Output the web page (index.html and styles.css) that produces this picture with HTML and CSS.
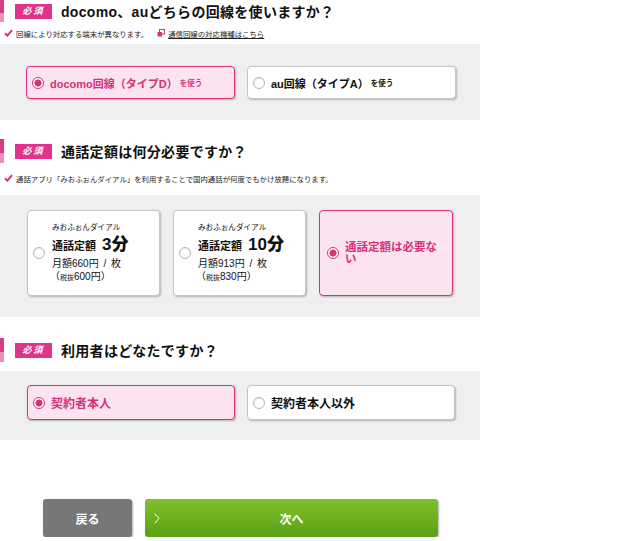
FILE: index.html
```html
<!DOCTYPE html>
<html lang="ja">
<head>
  <meta charset="UTF-8">
  <meta name="viewport" content="width=device-width, initial-scale=1">
  <title>お申し込み内容の選択</title>
  <link rel="stylesheet" href="styles.css">
</head>
<body>

<div class="form">

  <!-- 回線 -->
  <section class="q q-first">
    <h2 class="q-title"><span class="req">必須</span>docomo、auどちらの回線を使いますか？</h2>
    <p class="note">
      <svg class="check" width="9" height="8" viewBox="0 0 9 8"><path d="M1 4.2 L3.4 6.6 L8 1.2" fill="none" stroke="#d9307a" stroke-width="2"/></svg>
      回線により対応する端末が異なります。
      <a class="link" href="#">
        <svg width="8" height="8" viewBox="0 0 8 8"><rect x="2.5" y="0.5" width="5" height="4.5" fill="#fff" stroke="#d9307a"/><rect x="0.5" y="3" width="4.5" height="4.5" fill="#d9307a"/></svg>
        通信回線の対応機種はこちら
      </a>
    </p>
    <div class="panel panel-line">
      <label class="choice on"><span class="radio"></span>docomo回線（タイプD）<small>を使う</small></label>
      <label class="choice"><span class="radio"></span>au回線（タイプA）<small>を使う</small></label>
    </div>
  </section>

  <!-- 通話定額 -->
  <section class="q q-second">
    <h2 class="q-title"><span class="req">必須</span>通話定額は何分必要ですか？</h2>
    <p class="note">
      <svg class="check" width="9" height="8" viewBox="0 0 9 8"><path d="M1 4.2 L3.4 6.6 L8 1.2" fill="none" stroke="#d9307a" stroke-width="2"/></svg>
      通話アプリ「みおふぉんダイアル」を利用することで国内通話が何度でもかけ放題になります。
    </p>
    <div class="panel panel-plan">
      <label class="card">
        <span class="radio"></span>
        <span class="plan">
          <span class="plan-app">みおふぉんダイアル</span>
          <span class="plan-name">通話定額<b>3分</b></span>
          <span class="plan-price">月額660円 / 枚</span>
          <span class="plan-tax">（<small>税抜</small>600円）</span>
        </span>
      </label>
      <label class="card">
        <span class="radio"></span>
        <span class="plan">
          <span class="plan-app">みおふぉんダイアル</span>
          <span class="plan-name">通話定額<b>10分</b></span>
          <span class="plan-price">月額913円 / 枚</span>
          <span class="plan-tax">（<small>税抜</small>830円）</span>
        </span>
      </label>
      <label class="card on">
        <span class="radio"></span>
        <span class="plan-none">通話定額は必要ない</span>
      </label>
    </div>
  </section>

  <!-- 利用者 -->
  <section class="q q-third">
    <h2 class="q-title"><span class="req">必須</span>利用者はどなたですか？</h2>
    <div class="panel panel-user">
      <label class="choice big on"><span class="radio"></span>契約者本人</label>
      <label class="choice big"><span class="radio"></span>契約者本人以外</label>
    </div>
  </section>

  <div class="nav">
    <button class="btn btn-back" type="button">戻る</button>
    <button class="btn btn-next" type="button">
      <svg class="arrow" width="6" height="11" viewBox="0 0 6 11"><path d="M0.8 0.8 L5 5.5 L0.8 10.2" fill="none" stroke="#fff" stroke-width="1"/></svg>
      次へ
    </button>
  </div>

</div>

</body>
</html>
```

FILE: styles.css
```css
body {
  margin: 0;
  background: #fff;
  color: #111;
  font-family: "Liberation Sans", "Noto Sans CJK JP", sans-serif;
}

.form {
  width: 480px;
}

/* 見出し */
.q-title {
  display: flex;
  align-items: center;
  height: 24px;
  margin: 0;
  padding-left: 11px;
  border-left: 4px solid;
  border-image: linear-gradient(#dc3a86 58%, #ef8dbd 58%) 1;
  font-size: 14px;
  font-weight: bold;
  letter-spacing: 0.3px;
}

.q-first .q-title {
  height: 22px;
}

.req {
  display: inline-block;
  width: 37px;
  height: 15px;
  margin-right: 9px;
  background: #e0338a;
  color: #fff;
  font-size: 9px;
  font-style: italic;
  line-height: 15px;
  text-align: center;
  letter-spacing: 2px;
}

.note {
  display: flex;
  align-items: center;
  margin: 6px 0 0;
  padding-left: 4px;
  height: 10px;
  font-size: 7.4px;
  color: #222;
}

.check {
  margin-right: 3px;
}

.link {
  display: inline-flex;
  align-items: center;
  margin-left: 9px;
  color: #222;
  text-decoration: underline;
}

.link svg {
  margin-right: 3px;
}

.q-second {
  margin-top: 19px;
}

.q-second .note {
  margin-top: 10px;
}

.q-third {
  margin-top: 21px;
}

/* 選択肢 */
.panel {
  display: flex;
  background: #efefef;
}

.panel-line {
  margin-top: 6px;
  padding: 22px 0 21px 26px;
  gap: 12px;
}

.panel-plan {
  margin-top: 12px;
  padding: 15px 0 21px 27px;
  gap: 13px;
}

.panel-user {
  margin-top: 9px;
  padding: 14px 0 20px 27px;
  gap: 12px;
}

.choice {
  display: flex;
  align-items: center;
  box-sizing: border-box;
  width: 209px;
  height: 33px;
  padding-left: 5px;
  background: #fff;
  border: 1px solid #c6c6c6;
  border-radius: 4px;
  box-shadow: 1px 1px 2px rgba(0,0,0,0.25);
  font-size: 11px;
  font-weight: bold;
}

.choice small {
  font-size: 7.5px;
  margin-left: 2px;
}

.choice.big {
  width: 208px;
  height: 35px;
  font-size: 12px;
}

.radio {
  flex: none;
  box-sizing: border-box;
  width: 12px;
  height: 12px;
  margin-right: 6px;
  border: 1px solid #b5b5b5;
  border-radius: 50%;
  background: #fff;
  box-shadow: inset 0 1px 1px rgba(0,0,0,0.1);
}

.card {
  display: flex;
  align-items: center;
  box-sizing: border-box;
  width: 133px;
  height: 86px;
  padding: 0 10px 0 5px;
  background: #fff;
  border: 1px solid #c6c6c6;
  border-radius: 4px;
  box-shadow: 1px 1px 2px rgba(0,0,0,0.25);
}

.card .radio {
  margin-right: 7px;
}

.choice.on,
.card.on {
  background: #fbe4ef;
  border: 1.5px solid #d9307a;
  color: #d9307a;
}

.card.on {
  width: 134px;
  padding-left: 7px;
}

.on .radio {
  border: 1.5px solid #d9307a;
  background: radial-gradient(circle, #d9307a 0 3.3px, #fff 3.8px);
  box-shadow: none;
}

.card.on .radio {
  margin-right: 6px;
}

.plan {
  display: flex;
  flex-direction: column;
}

.plan-app {
  font-size: 7.6px;
  line-height: 12px;
}

.plan-name {
  font-size: 11px;
  font-weight: bold;
  line-height: 22px;
}

.plan-name b {
  margin-left: 6px;
  font-size: 17px;
}

.plan-price {
  font-size: 10px;
  line-height: 13px;
  word-spacing: 2px;
}

.plan-tax {
  font-size: 10px;
  line-height: 13px;
  margin-left: -2px;
}

.plan-tax small {
  font-size: 7px;
}

.plan-none {
  font-size: 11.5px;
  font-weight: bold;
  line-height: 12px;
}

/* ボタン */
.nav {
  display: flex;
  gap: 13px;
  margin-top: 59px;
  padding-left: 43px;
}

.btn {
  position: relative;
  height: 38px;
  border: none;
  border-radius: 3px;
  color: #fff;
  font-family: inherit;
  font-size: 12px;
  font-weight: bold;
  box-shadow: 1px 1px 2px rgba(0,0,0,0.3);
}

.btn-back {
  width: 89px;
  background: #777;
}

.btn-next {
  display: flex;
  align-items: center;
  justify-content: center;
  width: 293px;
  background: linear-gradient(#80c12c, #5b9f14);
}

.arrow {
  position: absolute;
  left: 9px;
  top: 14px;
}
```
